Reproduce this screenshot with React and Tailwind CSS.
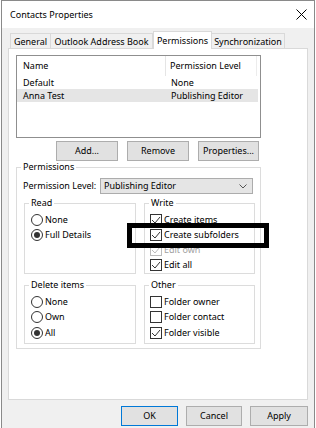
import { useState } from "react";

function Radio({ checked }) {
    return (
        <span className="w-[12px] h-[12px] rounded-full border border-[#333] bg-white flex items-center justify-center shrink-0">
            {checked && <span className="w-[6px] h-[6px] rounded-full bg-[#333]" />}
        </span>
    );
}

function Check({ checked, disabled }) {
    return (
        <span
            className={
                disabled
                    ? "w-[12px] h-[12px] border border-[#bcbcbc] bg-white flex items-center justify-center shrink-0"
                    : "w-[12px] h-[12px] border border-[#333] bg-white flex items-center justify-center shrink-0"
            }
        >
            {checked && (
                <svg width="10" height="10" viewBox="0 0 10 10">
                    <polyline
                        points="1,5 4,8 9,2"
                        fill="none"
                        stroke={disabled ? "#bcbcbc" : "#333"}
                        strokeWidth="1"
                    />
                </svg>
            )}
        </span>
    );
}

function Group({ label, className, children }) {
    return (
        <fieldset className={"border border-[#dcdcdc] " + className}>
            <legend className="ml-[4px] px-[2px] leading-[12px]">{label}</legend>
            {children}
        </fieldset>
    );
}

function Button({ children, className, primary }) {
    return (
        <button
            type="button"
            className={
                (primary ? "border-[#0078d7] " : "border-[#adadad] ") +
                "h-[20px] bg-[#e1e1e1] border flex items-center justify-center leading-[12px] " +
                className
            }
        >
            {children}
        </button>
    );
}

const tabs = [
    { name: "General", w: "w-[41px]" },
    { name: "Outlook Address Book", w: "w-[103px]" },
    { name: "Permissions", w: "w-[59px]", active: true },
    { name: "Synchronization", w: "w-[74px]" },
];

export default function App() {
    const [selected, setSelected] = useState(1);

    return (
        <div className="w-[316px] h-[428px] bg-white font-['Noto_Sans',sans-serif] text-[9px] leading-[12px] text-black overflow-hidden">
            <div className="w-[314px] h-[428px] ml-px border-l border-r border-t border-[#8a8a8a] bg-[#f0f0f0] flex flex-col">
                {/* title bar */}
                <div className="h-[27px] bg-white flex items-center justify-between pl-[8px] pr-[7px] shrink-0">
                    <span>Contacts Properties</span>
                    <svg width="11" height="11" viewBox="0 0 11 11">
                        <path d="M0.5 0.5 L10.5 10.5 M10.5 0.5 L0.5 10.5" stroke="#000" strokeWidth="1" />
                    </svg>
                </div>

                {/* tabs */}
                <div className="flex items-end h-[19px] mt-[1px] pl-[8px] shrink-0">
                    {tabs.map((t) =>
                        t.active ? (
                            <div
                                key={t.name}
                                className={t.w + " h-[18px] -mb-px relative z-10 bg-white border border-b-0 border-[#d9d9d9] flex items-center justify-center"}
                            >
                                {t.name}
                            </div>
                        ) : (
                            <div
                                key={t.name}
                                className={t.w + " h-[15px] -ml-px first:ml-0 border border-b-0 border-[#d9d9d9] flex items-center justify-center pt-px"}
                            >
                                {t.name}
                            </div>
                        )
                    )}
                </div>

                {/* panel */}
                <div className="relative ml-[6px] w-[300px] h-[352px] bg-white border border-[#d9d9d9] shrink-0 pt-[6px] pl-[7px]">
                    {/* list */}
                    <div className="w-[245px] h-[83px] border border-[#8f8f8f]">
                        <div className="flex h-[20px] items-center">
                            <div className="w-[149px] h-full flex items-center pl-[6px] border-r border-[#e5e5e5]">Name</div>
                            <div className="w-[91px] h-full flex items-center pl-[4px] border-r border-[#ececec]">Permission Level</div>
                        </div>
                        {[
                            ["Default", "None"],
                            ["Anna Test", "Publishing Editor"],
                        ].map((r, i) => (
                            <div
                                key={r[0]}
                                onClick={() => setSelected(i)}
                                className={(selected === i ? "bg-[#e5e5e5] " : "") + "flex h-[13px] items-center w-[241px]"}
                            >
                                <div className="w-[149px] pl-[6px]">{r[0]}</div>
                                <div className="pl-[5px]">{r[1]}</div>
                            </div>
                        ))}
                    </div>

                    {/* list buttons */}
                    <div className="flex mt-[3px] h-[18px] pl-[40px] gap-[9px]">
                        <Button className="w-[62px] h-[18px]">Add...</Button>
                        <Button className="w-[62px] h-[18px]">Remove</Button>
                        <Button className="w-[61px] h-[18px]">Properties...</Button>
                    </div>

                    {/* permissions */}
                    <Group label="Permissions" className="mt-[2px] w-[245px] pb-[4px]">
                        <div className="flex items-center h-[16px] mt-[5px] pl-[6px]">
                            <span className="w-[77px]">Permission Level:</span>
                            <div className="w-[153px] h-[16px] bg-[#e5e5e5] border border-[#acacac] flex items-center justify-between pl-[3px] pr-[5px]">
                                <span>Publishing Editor</span>
                                <svg width="8" height="5" viewBox="0 0 8 5">
                                    <polyline points="0.5,0.5 4,4 7.5,0.5" fill="none" stroke="#555" strokeWidth="1" />
                                </svg>
                            </div>
                        </div>

                        <div className="flex gap-[8px] pl-[7px] mt-[3px]">
                            <Group label="Read" className="w-[112px] h-[77px]">
                                <div className="flex flex-col mt-[3px] pl-[6px]">
                                    <div className="flex items-center gap-[2px] h-[15px]">
                                        <Radio />
                                        <span>None</span>
                                    </div>
                                    <div className="flex items-center gap-[2px] h-[15px]">
                                        <Radio checked />
                                        <span>Full Details</span>
                                    </div>
                                </div>
                            </Group>
                            <Group label="Write" className="w-[111px] h-[77px]">
                                <div className="flex flex-col mt-[3px] pl-[5px]">
                                    <div className="flex items-center gap-[2px] h-[15px]">
                                        <Check checked />
                                        <span>Create items</span>
                                    </div>
                                    <div className="flex items-center gap-[2px] h-[15px]">
                                        <Check checked />
                                        <span>Create subfolders</span>
                                    </div>
                                    <div className="flex items-center gap-[2px] h-[15px] text-[#a0a0a0]">
                                        <Check checked disabled />
                                        <span>Edit own</span>
                                    </div>
                                    <div className="flex items-center gap-[2px] h-[15px]">
                                        <Check checked />
                                        <span>Edit all</span>
                                    </div>
                                </div>
                            </Group>
                        </div>

                        <div className="flex gap-[8px] pl-[7px] mt-[5px]">
                            <Group label="Delete items" className="w-[112px] h-[65px]">
                                <div className="flex flex-col mt-[3px] pl-[6px]">
                                    <div className="flex items-center gap-[2px] h-[15px]">
                                        <Radio />
                                        <span>None</span>
                                    </div>
                                    <div className="flex items-center gap-[2px] h-[16px]">
                                        <Radio />
                                        <span>Own</span>
                                    </div>
                                    <div className="flex items-center gap-[2px] h-[15px]">
                                        <Radio checked />
                                        <span>All</span>
                                    </div>
                                </div>
                            </Group>
                            <Group label="Other" className="w-[111px] h-[65px]">
                                <div className="flex flex-col mt-[3px] pl-[5px]">
                                    <div className="flex items-center gap-[2px] h-[15px]">
                                        <Check />
                                        <span>Folder owner</span>
                                    </div>
                                    <div className="flex items-center gap-[2px] h-[16px]">
                                        <Check />
                                        <span>Folder contact</span>
                                    </div>
                                    <div className="flex items-center gap-[2px] h-[15px]">
                                        <Check checked />
                                        <span>Folder visible</span>
                                    </div>
                                </div>
                            </Group>
                        </div>
                    </Group>

                    {/* annotation box */}
                    <div className="absolute left-[118px] top-[174px] w-[142px] h-[25px] border-[5px] border-black" />
                </div>

                {/* dialog buttons */}
                <div className="flex justify-end gap-[8px] pr-[6px] mt-[6px]">
                    <Button primary className="w-[57px]">OK</Button>
                    <Button className="w-[56px]">Cancel</Button>
                    <Button className="w-[58px]">Apply</Button>
                </div>
            </div>
        </div>
    );
}
